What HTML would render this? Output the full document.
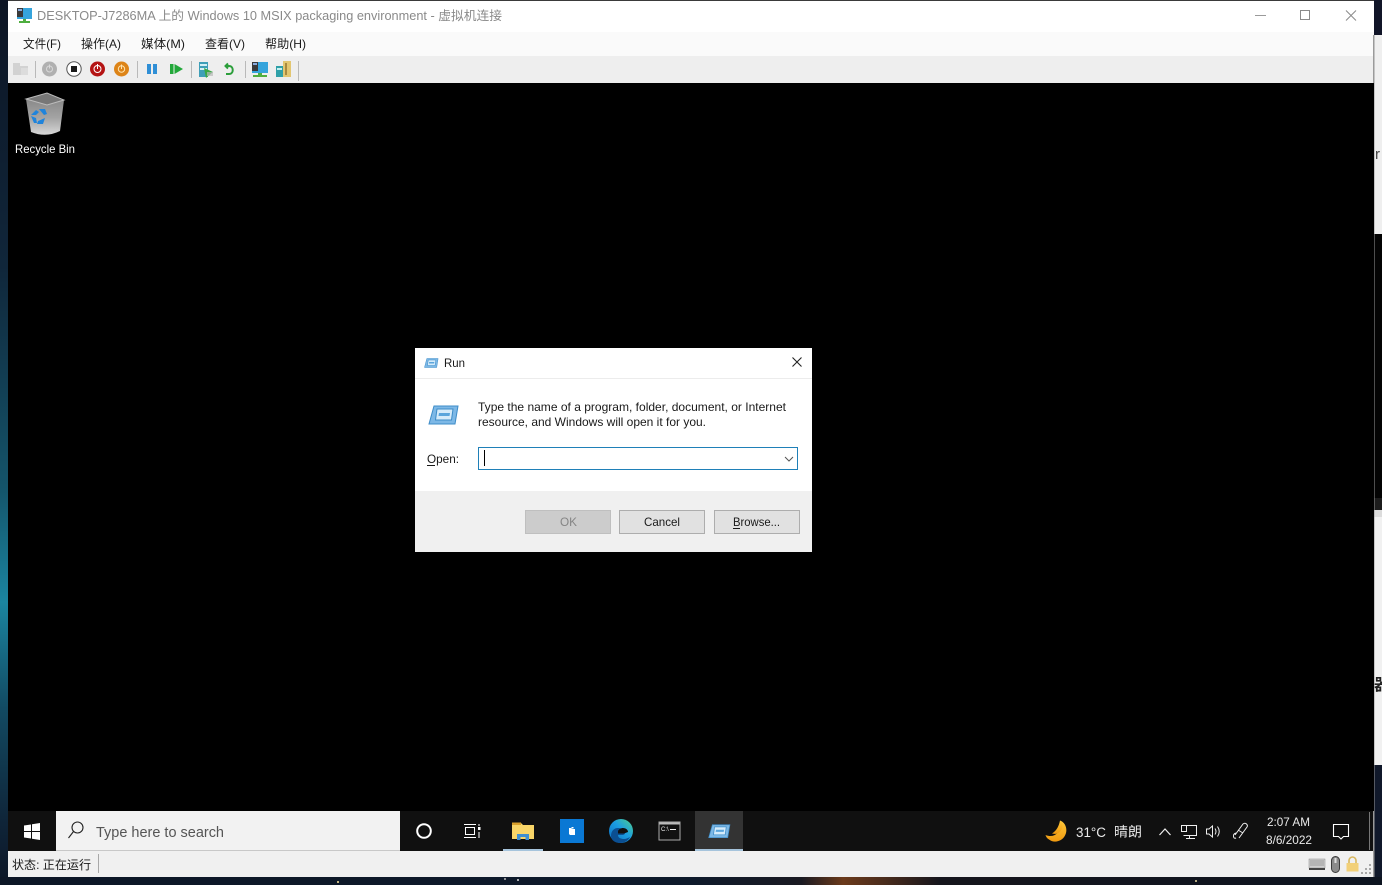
<!DOCTYPE html>
<html><head><meta charset="utf-8"><style>
html,body{margin:0;padding:0;background:#000;width:1382px;height:885px;overflow:hidden}
svg{display:block;filter:blur(.3px)}
text{font-family:"Liberation Sans","Noto Sans CJK SC",sans-serif;white-space:pre}
</style></head><body>
<svg xmlns="http://www.w3.org/2000/svg" width="1382" height="885" viewBox="0 0 1382 885">
<defs>
<linearGradient id="left" x1="0" y1="0" x2="0" y2="1">
<stop offset="0" stop-color="#0d1524"/><stop offset=".3" stop-color="#10263a"/><stop offset=".55" stop-color="#14546a"/><stop offset=".68" stop-color="#1b85a0"/><stop offset=".8" stop-color="#124a62"/><stop offset=".93" stop-color="#0f2438"/><stop offset="1" stop-color="#0c1626"/>
</linearGradient>
<linearGradient id="bot" x1="0" y1="0" x2="1" y2="0">
<stop offset="0" stop-color="#0c1626"/><stop offset=".5" stop-color="#0e1a2b"/><stop offset=".58" stop-color="#1a1a22"/><stop offset=".61" stop-color="#6b3a1b"/><stop offset=".64" stop-color="#4a2c1c"/><stop offset=".68" stop-color="#15151c"/><stop offset="1" stop-color="#0d1420"/>
</linearGradient>
<linearGradient id="bin" x1="0" y1="0" x2="0" y2="1"><stop offset="0" stop-color="#808080"/><stop offset=".6" stop-color="#a4a4a4"/><stop offset="1" stop-color="#d8d8d8"/></linearGradient>
<linearGradient id="moon" x1="0" y1="0" x2="0" y2="1"><stop offset="0" stop-color="#ffc83a"/><stop offset="1" stop-color="#f09a10"/></linearGradient>
<linearGradient id="edge" x1="1" y1="0" x2="0" y2="1"><stop offset="0" stop-color="#4fd08a"/><stop offset=".45" stop-color="#1b9de2"/><stop offset="1" stop-color="#0c6cc0"/></linearGradient>
<g id="run">
<path d="M6 1H30L27 19H1Z" fill="#7db8e6" stroke="#3d8cc8" stroke-width="1"/>
<path d="M9 4H25L23.500 15H7.500Z" fill="#d5ebfa" stroke="#3d8cc8" stroke-width="1"/>
<path d="M11 8H22L21.500 11H10.500Z" fill="#5aa5dc"/>
</g>
</defs>

<!-- background outside the window -->
<rect x="0" y="0" width="8" height="885" fill="url(#left)"/>
<rect x="0" y="877" width="1382" height="8" fill="url(#bot)"/>
<rect x="1374" y="0" width="8" height="35" fill="#111528"/>
<rect x="1374" y="35" width="8" height="199" fill="#efefef"/>
<rect x="1374" y="234" width="8" height="264" fill="#030303"/>
<rect x="1374" y="498" width="8" height="12" fill="#1c1c1c"/>
<rect x="1374" y="510" width="8" height="7" fill="#dcdcdc"/>
<rect x="1374" y="517" width="8" height="248" fill="#f1f1f1"/>
<rect x="1374" y="765" width="8" height="112" fill="#10182a"/>
<text x="1375" y="159" font-size="15" fill="#444">r</text>
<text x="1374" y="690" font-size="16" font-weight="bold" fill="#222">器</text>
<circle cx="338" cy="882" r="1" fill="#ffe9a0"/><circle cx="518" cy="880" r="1" fill="#ddd"/><circle cx="505" cy="879" r="1" fill="#bbb"/><circle cx="1196" cy="881" r="1" fill="#e8d8a0"/>

<!-- window chrome -->
<rect x="8" y="0" width="1366" height="1.500" fill="#3a3a3a"/>
<rect x="8" y="1" width="1366" height="31" fill="#ffffff"/>
<rect x="8" y="32" width="1366" height="24" fill="#fafafa"/>
<rect x="8" y="56" width="1366" height="27" fill="#eeeeee"/>
<rect x="1373" y="35" width="1.500" height="842" fill="#9a9a9a"/>
<rect x="8" y="83" width="1366" height="728" fill="#000"/>

<!-- title icon -->
<rect x="17" y="8" width="15" height="11" fill="#35a4dc"/><rect x="17" y="8" width="6" height="9" fill="#3a3a3a"/><rect x="18" y="9" width="4" height="2" fill="#8ad"/>
<path d="M23 19h3v2h4v2H19v-2h4z" fill="#4fae3f"/>
<text x="37" y="20" font-size="12.500" fill="#8a8a8a" textLength="465" lengthAdjust="spacingAndGlyphs">DESKTOP-J7286MA 上的 Windows 10 MSIX packaging environment - 虚拟机连接</text>
<!-- window controls -->
<rect x="1255" y="15" width="11" height="1" fill="#9a9a9a"/>
<rect x="1300.500" y="10.500" width="9" height="9" fill="none" stroke="#8a8a8a"/>
<path d="M1346 10.500l10 10M1356 10.500l-10 10" stroke="#8a8a8a" stroke-width="1" fill="none"/>

<!-- menu -->
<g font-size="12" fill="#1a1a1a">
<text x="23" y="48" textLength="38" lengthAdjust="spacingAndGlyphs">文件(F)</text>
<text x="81" y="48" textLength="40" lengthAdjust="spacingAndGlyphs">操作(A)</text>
<text x="141" y="48" textLength="44" lengthAdjust="spacingAndGlyphs">媒体(M)</text>
<text x="205" y="48" textLength="40" lengthAdjust="spacingAndGlyphs">查看(V)</text>
<text x="265" y="48" textLength="41" lengthAdjust="spacingAndGlyphs">帮助(H)</text>
</g>

<!-- toolbar -->
<path d="M13 63h7v3h8v9H13z" fill="#d2d2d2"/><path d="M21 68h7v7h-7z" fill="#dcdcdc"/>
<g fill="#b9b9b9"><rect x="35" y="61" width="1" height="17"/><rect x="137" y="61" width="1" height="17"/><rect x="191" y="61" width="1" height="17"/><rect x="245" y="61" width="1" height="17"/><rect x="298" y="61" width="1" height="20"/></g>
<circle cx="49.500" cy="69" r="7.500" fill="#b0b0b0"/><circle cx="49.500" cy="69" r="3" fill="none" stroke="#d8d8d8"/><rect x="49" y="64.500" width="1" height="4" fill="#d8d8d8"/>
<circle cx="74" cy="69" r="7.200" fill="#fff" stroke="#555" stroke-width="1"/><rect x="71" y="66" width="6" height="6" fill="#1a1a1a"/>
<circle cx="97.500" cy="69" r="7.500" fill="#b41414"/><circle cx="97.500" cy="69" r="3.500" fill="none" stroke="#fff"/><rect x="97" y="64" width="1" height="5" fill="#fff"/>
<circle cx="121.500" cy="69" r="7.500" fill="#dd8418"/><circle cx="121.500" cy="69" r="3.200" fill="none" stroke="#ffe4b0"/><rect x="121" y="64.500" width="1" height="4.500" fill="#ffe4b0"/>
<rect x="147" y="64" width="4" height="10" fill="#2f8fd6"/><rect x="153" y="64" width="4" height="10" fill="#2f8fd6"/>
<rect x="170" y="64" width="3.500" height="10" fill="#22a83a"/><path d="M174.500 64L183 69l-8.500 5z" fill="#22a83a"/>
<rect x="199" y="62" width="9" height="15" fill="#3f9fb8"/><rect x="200" y="64" width="7" height="2" fill="#d4f0f6"/><rect x="200" y="68" width="7" height="2" fill="#d4f0f6"/>
<path d="M204 68l9 4-7 6z" fill="#3aa845"/><rect x="207" y="72" width="6" height="4" fill="#bbb" opacity=".7"/>
<path d="M228 63.500l-2.500 2.500 2.500 2.500M226 66h3c5 0 5 8 0 8h-3" fill="none" stroke="#2b9e3a" stroke-width="2"/>
<rect x="252" y="62" width="16" height="11" fill="#35a4dc"/><rect x="252" y="62" width="6" height="9" fill="#3a3a3a"/><rect x="253" y="63" width="4" height="2" fill="#8ad"/>
<path d="M258 73h4v2h5v2h-14v-2h5z" fill="#4fae3f"/>
<rect x="283" y="61" width="8" height="16" fill="#e3c670"/><rect x="285" y="63" width="2" height="12" fill="#a88a40"/>
<rect x="276" y="66" width="7" height="11" fill="#2fa0a8"/><rect x="277" y="68" width="5" height="2" fill="#c5f0f0"/>

<!-- recycle bin -->
<path d="M26 99L47 93L64 100L60 131Q46 138 31 132Z" fill="url(#bin)"/>
<path d="M26 99L47 93L64 100L47 105Z" fill="#777" stroke="#bcbcbc" stroke-width="1"/>
<path d="M31 115l5-5 3 2-3 3zM39 109h6l2 5-3 1zM45 118l-2 6h-6l1-3zM31 116l3 7h3l-1-5z" fill="#1f84dc"/>
<text x="15" y="153" font-size="12" fill="#fff" textLength="60" lengthAdjust="spacingAndGlyphs">Recycle Bin</text>

<!-- run dialog -->
<rect x="415" y="348" width="397" height="204" fill="#fff"/>
<rect x="415" y="378" width="397" height="1" fill="#ececec"/>
<rect x="415" y="491" width="397" height="61" fill="#f0f0f0"/>
<use href="#run" transform="translate(424 358) scale(.47 .5)"/>
<text x="444" y="367" font-size="12" fill="#1a1a1a" textLength="21" lengthAdjust="spacingAndGlyphs">Run</text>
<path d="M792.500 357.500l9 9M801.500 357.500l-9 9" stroke="#222" stroke-width="1.100" fill="none"/>
<use href="#run" transform="translate(428 405)"/>
<g font-size="12" fill="#1a1a1a">
<text x="478" y="411" textLength="308" lengthAdjust="spacingAndGlyphs">Type the name of a program, folder, document, or Internet</text>
<text x="478" y="426" textLength="228" lengthAdjust="spacingAndGlyphs">resource, and Windows will open it for you.</text>
<text x="427" y="463" textLength="32" lengthAdjust="spacingAndGlyphs">Open:</text>
</g>
<rect x="427" y="465" width="8" height="1" fill="#1a1a1a"/>
<rect x="478.500" y="447.500" width="319" height="22" fill="#fff" stroke="#1f80b8" stroke-width="1"/>
<rect x="484" y="450" width="1" height="16" fill="#000"/>
<path d="M785 457l4 4 4-4" fill="none" stroke="#555" stroke-width="1"/>
<rect x="525.500" y="510.500" width="85" height="23" fill="#cccccc" stroke="#bfbfbf"/>
<rect x="619.500" y="510.500" width="85" height="23" fill="#e1e1e1" stroke="#adadad"/>
<rect x="714.500" y="510.500" width="85" height="23" fill="#e1e1e1" stroke="#adadad"/>
<text x="560" y="526" font-size="12" fill="#858585" textLength="17" lengthAdjust="spacingAndGlyphs">OK</text>
<text x="644" y="526" font-size="12" fill="#1a1a1a" textLength="36" lengthAdjust="spacingAndGlyphs">Cancel</text>
<text x="733" y="526" font-size="12" fill="#1a1a1a" textLength="47" lengthAdjust="spacingAndGlyphs">Browse...</text>
<rect x="733" y="528" width="7" height="1" fill="#1a1a1a"/>

<!-- taskbar -->
<rect x="8" y="811" width="1365" height="40" fill="#101010"/>
<path d="M24 825.500l7-1v6.500h-7zM32 824.300l8-1.300v8h-8zM24 832h7v6.500l-7-1zM32 832h8v8l-8-1.300z" fill="#fff"/>
<rect x="56" y="811" width="344" height="40" fill="#f2f2f2"/>
<rect x="56" y="850" width="344" height="1" fill="#c8c8c8"/>
<circle cx="77.500" cy="827.500" r="5.500" fill="none" stroke="#222" stroke-width="1.100"/>
<path d="M73.500 831.500L68.500 838" stroke="#222" stroke-width="1.100" fill="none"/>
<text x="96" y="837" font-size="14.500" fill="#555" textLength="128" lengthAdjust="spacingAndGlyphs">Type here to search</text>
<circle cx="424" cy="831" r="6.800" fill="none" stroke="#fff" stroke-width="2"/>
<path d="M464 824.500h12M464 837.500h12M465.500 827.500h9v7h-9z" fill="none" stroke="#fff" stroke-width="1"/>
<rect x="478" y="827" width="2.500" height="3" fill="#fff"/><rect x="478.500" y="824" width="1" height="2" fill="#fff"/><rect x="478.500" y="832" width="1" height="6" fill="#fff"/>
<!-- explorer -->
<path d="M512 823h9l2 2h11v14h-22z" fill="#f8d568"/><rect x="512" y="822.500" width="9" height="2.500" fill="#d9a02c"/>
<path d="M517 840v-6h12v6h-3.500v-3h-5v3z" fill="#3f8fd0"/>
<rect x="503" y="849" width="40" height="2" fill="#a6c4dc"/>
<!-- store -->
<rect x="560" y="819" width="24" height="24" fill="#0a78d4"/>
<path d="M569 828h2l1 1h3v6h-5l-1-1z" fill="#fff"/><rect x="571.500" y="827" width="2" height="1.500" fill="#fff"/>
<!-- edge -->
<circle cx="621" cy="831" r="12" fill="url(#edge)"/>
<path d="M611 836c0-5 3-8 7-8 5 0 7 3 7 5 0 1-1 2-3 2h-4c0 3 3 4 6 4 2 0 4-1 6-2-2 4-6 6-10 6-5 0-9-3-9-7z" fill="#0b4f92"/>
<path d="M618 831c1-2 3-3 5-3 3 0 5 2 5 4l-4 1.500h-6z" fill="#111"/>
<!-- cmd -->
<rect x="659" y="822" width="21" height="18" fill="#111" stroke="#aaa" stroke-width="1"/>
<rect x="659.500" y="822.500" width="20" height="2" fill="#bbb"/>
<text x="661" y="831" font-size="6" fill="#eee">C:\</text><rect x="670" y="829" width="6" height="1" fill="#eee"/>
<!-- run taskbar -->
<rect x="695" y="811" width="48" height="40" fill="#333333"/>
<rect x="695" y="849" width="48" height="2" fill="#a6c4dc"/>
<use href="#run" transform="translate(708 824) scale(.73 .72)"/>
<!-- tray -->
<path d="M1060 820.500c6 2 8 10 5 15-3 6-11 8-16 4-2-1-3-3-3.500-4.500 5 2 9 1 12-2 3-4 4-8 2.500-12.500z" fill="url(#moon)"/>
<path d="M1060 820.500c-1 5-3 10-8 13 4 1 7 0 9-3 2-3 2-7-1-10z" fill="url(#moon)"/>
<text x="1076" y="837" font-size="13.500" fill="#eaeaea" textLength="30" lengthAdjust="spacingAndGlyphs">31°C</text>
<text x="1114" y="836.500" font-size="13.500" fill="#eaeaea" textLength="28" lengthAdjust="spacingAndGlyphs">晴朗</text>
<path d="M1159.500 835l5.500-6 5.500 6" fill="none" stroke="#eee" stroke-width="1.200"/>
<path d="M1183.500 825.500h13v10h-13M1189.500 835.500v3M1186 838.500h9" fill="none" stroke="#eee" stroke-width="1"/>
<rect x="1181.500" y="825.500" width="5" height="6" fill="#101010" stroke="#eee"/>
<path d="M1206.500 829h2.500l3.500-3v11l-3.500-3h-2.500zM1215 828.500q2 3 0 6M1217.500 826.500q3.500 5 0 10" fill="none" stroke="#eee" stroke-width="1"/>
<path d="M1235 835l8-11q2-1.500 3.500 0t.5 3l-8 11M1238 830l5 3M1236 833q-3 1-2.500 3.500t2.500 1.500" fill="none" stroke="#eee" stroke-width="1"/>
<text x="1267" y="826" font-size="12" fill="#eaeaea" textLength="43" lengthAdjust="spacingAndGlyphs">2:07 AM</text>
<text x="1266" y="844" font-size="12" fill="#eaeaea" textLength="46" lengthAdjust="spacingAndGlyphs">8/6/2022</text>
<path d="M1333.500 824.500h15v12h-5l-2.500 2.500-2.500-2.500h-5z" fill="none" stroke="#fff" stroke-width="1.100"/>
<rect x="1369" y="812" width="1" height="38" fill="#777"/>

<!-- status bar -->
<rect x="8" y="851" width="1365" height="26" fill="#f0f0f0"/>
<text x="12" y="869" font-size="12" fill="#1a1a1a" textLength="79" lengthAdjust="spacingAndGlyphs">状态: 正在运行</text>
<rect x="98" y="854" width="1" height="19" fill="#a8a8a8"/>
<rect x="1309" y="859" width="16" height="9" fill="#cfcfcf" stroke="#8a8a8a" stroke-width=".5"/>
<path d="M1310 861h14M1310 863h14M1310 865h14" stroke="#888" stroke-width=".7"/><rect x="1309" y="868" width="16" height="2" fill="#444"/>
<rect x="1331.500" y="856.500" width="8" height="16" rx="4" fill="#8a8a8a" stroke="#3a3a3a"/>
<rect x="1334.500" y="858" width="2" height="5" fill="#ddd"/>
<path d="M1349 863v-2.500a3.500 3.500 0 0 1 7 0V863" fill="none" stroke="#d8b860" stroke-width="1.600"/>
<rect x="1346.500" y="863" width="12" height="8.500" fill="#f2d078"/>
<g fill="#a8a8a8"><rect x="1369" y="864" width="2" height="2"/><rect x="1365" y="868" width="2" height="2"/><rect x="1369" y="868" width="2" height="2"/><rect x="1361" y="872" width="2" height="2"/><rect x="1365" y="872" width="2" height="2"/><rect x="1369" y="872" width="2" height="2"/></g>
</svg>
</body></html>
